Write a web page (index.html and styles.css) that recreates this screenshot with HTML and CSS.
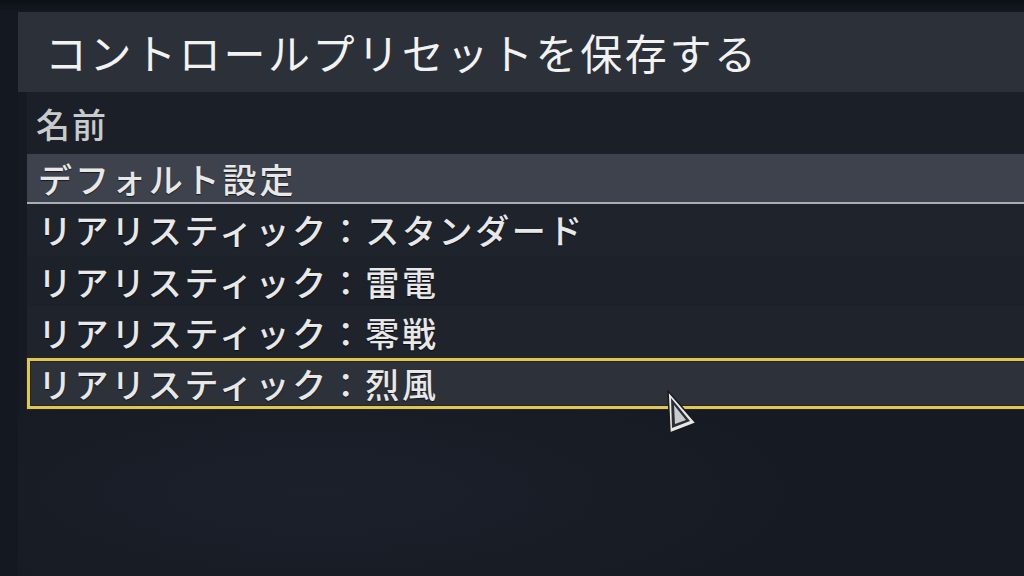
FILE: index.html
```html
<!DOCTYPE html>
<html lang="ja">
<head>
<meta charset="utf-8">
<link rel="stylesheet" href="styles.css">
</head>
<body>
<div class="screen">
  <div class="panel">
    <div class="title">コントロールプリセットを保存する</div>
    <div class="list">
      <div class="header">名前</div>
      <div class="row default">デフォルト設定</div>
      <div class="row r1">リアリスティック：スタンダード</div>
      <div class="row r2">リアリスティック：雷電</div>
      <div class="row r3">リアリスティック：零戦</div>
      <div class="row selected">リアリスティック：烈風
        <svg class="cursor" width="34" height="48" viewBox="0 0 34 48">
          <path d="M3 2 L31 34 L5 44 Z" fill="#e8e8e8" stroke="#1a1a1a" stroke-width="1.5" stroke-linejoin="round"/>
          <path d="M6 9 L25 32 L7 39 Z" fill="#2a2d33"/>
          <path d="M9 16 L21 31 L10 35 Z" fill="#c9cbd0"/>
        </svg>
      </div>
    </div>
  </div>
</div>
</body>
</html>
```
FILE: styles.css
```css
html, body {
  margin: 0;
  padding: 0;
}
body {
  width: 1024px;
  height: 576px;
  overflow: hidden;
  background: #0f131a;
  font-family: "Noto Sans CJK JP", "Noto Sans", sans-serif;
}
.screen {
  width: 1024px;
  height: 576px;
  padding: 12px 0 0 18px;
  box-sizing: border-box;
  background: linear-gradient(180deg, #0c1016 0px, #141820 12px);
}
.panel {
  display: flex;
  flex-direction: column;
  height: 100%;
  background: radial-gradient(ellipse 500px 140px at 300px 480px, #1b202a 0%, #151a23 100%);
  background-color: #151a23;
}
.title {
  height: 80px;
  background: #2b3039;
  color: #f2f2f2;
  font-size: 42px;
  font-weight: 400;
  letter-spacing: 2.6px;
  line-height: 80px;
  padding-left: 27px;
  white-space: nowrap;
}
.list {
  margin-left: 9px;
  display: flex;
  flex-direction: column;
}
.header {
  height: 62px;
  line-height: 64px;
  padding-left: 9px;
  background: #1a1f28;
  color: #c9cacc;
  font-size: 34px;
  font-weight: 500;
  letter-spacing: 2px;
}
.row {
  position: relative;
  height: 51px;
  line-height: 51px;
  padding-left: 11px;
  color: #e8e8e8;
  font-size: 34px;
  font-weight: 500;
  letter-spacing: 2.6px;
  white-space: nowrap;
  text-shadow: 0 1px 1px rgba(0,0,0,0.6);
}
.default {
  height: 48px;
  line-height: 50px;
  background: #3d424c;
  border-bottom: 2px solid #a8adb6;
  letter-spacing: 2.9px;
}
.r1 { background: #1e232c; height: 52px; }
.r2 { background: #1c212a; }
.r3 { background: #1e232c; }
.selected {
  height: 45px;
  line-height: 45px;
  padding-left: 8px;
  margin-right: -4px;
  background: #2c313a;
  border: 3px solid #dcc65e;
  box-shadow: 0 0 0 1px #2b2612, inset 0 0 0 1px #2b2612;
}
.cursor {
  position: absolute;
  left: 635px;
  top: 28px;
}
```
